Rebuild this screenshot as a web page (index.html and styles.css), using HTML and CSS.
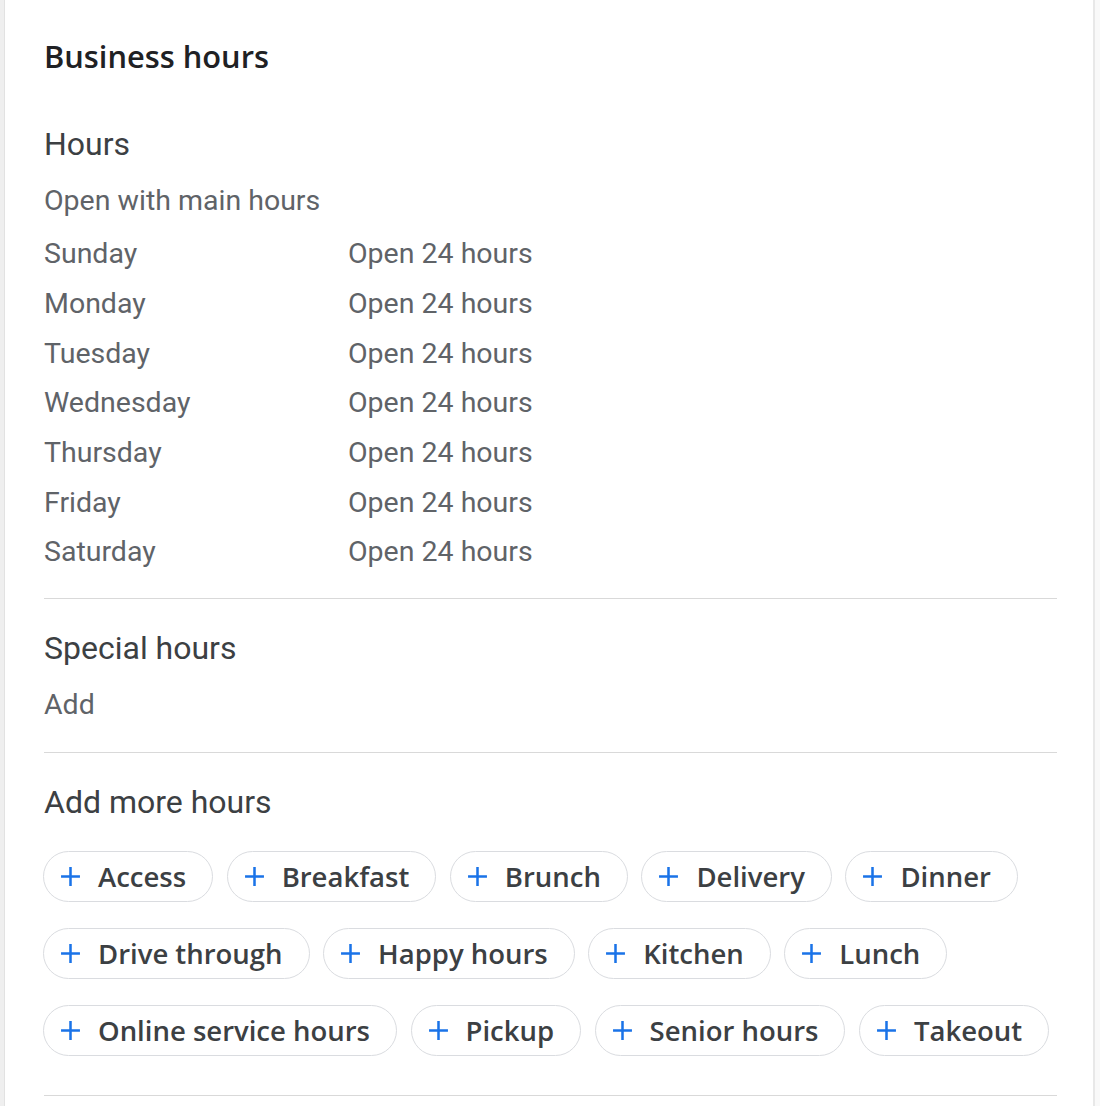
FILE: index.html
```html
<!DOCTYPE html>
<html>
<head>
<meta charset="utf-8">
<link rel="stylesheet" href="styles.css">
</head>
<body>
<div class="page">
  <div class="gutter"></div>
  <main class="card">
    <h1 class="title">Business hours</h1>

    <section class="section">
      <h2 class="heading">Hours</h2>
      <div class="sub">Open with main hours</div>
      <div class="days">
        <div class="day">Sunday</div><div class="val">Open 24 hours</div>
        <div class="day">Monday</div><div class="val">Open 24 hours</div>
        <div class="day">Tuesday</div><div class="val">Open 24 hours</div>
        <div class="day">Wednesday</div><div class="val">Open 24 hours</div>
        <div class="day">Thursday</div><div class="val">Open 24 hours</div>
        <div class="day">Friday</div><div class="val">Open 24 hours</div>
        <div class="day">Saturday</div><div class="val">Open 24 hours</div>
      </div>
    </section>

    <section class="section bordered">
      <h2 class="heading">Special hours</h2>
      <div class="sub">Add</div>
    </section>

    <section class="section bordered last">
      <h2 class="heading">Add more hours</h2>
      <div class="chips">
        <button class="chip"><svg class="plus" viewBox="0 0 20 20"><path d="M10 1v18M1 10h18"/></svg><span>Access</span></button>
        <button class="chip"><svg class="plus" viewBox="0 0 20 20"><path d="M10 1v18M1 10h18"/></svg><span>Breakfast</span></button>
        <button class="chip"><svg class="plus" viewBox="0 0 20 20"><path d="M10 1v18M1 10h18"/></svg><span>Brunch</span></button>
        <button class="chip"><svg class="plus" viewBox="0 0 20 20"><path d="M10 1v18M1 10h18"/></svg><span>Delivery</span></button>
        <button class="chip"><svg class="plus" viewBox="0 0 20 20"><path d="M10 1v18M1 10h18"/></svg><span>Dinner</span></button>
        <button class="chip"><svg class="plus" viewBox="0 0 20 20"><path d="M10 1v18M1 10h18"/></svg><span>Drive through</span></button>
        <button class="chip"><svg class="plus" viewBox="0 0 20 20"><path d="M10 1v18M1 10h18"/></svg><span>Happy hours</span></button>
        <button class="chip"><svg class="plus" viewBox="0 0 20 20"><path d="M10 1v18M1 10h18"/></svg><span>Kitchen</span></button>
        <button class="chip"><svg class="plus" viewBox="0 0 20 20"><path d="M10 1v18M1 10h18"/></svg><span>Lunch</span></button>
        <button class="chip"><svg class="plus" viewBox="0 0 20 20"><path d="M10 1v18M1 10h18"/></svg><span>Online service hours</span></button>
        <button class="chip"><svg class="plus" viewBox="0 0 20 20"><path d="M10 1v18M1 10h18"/></svg><span>Pickup</span></button>
        <button class="chip"><svg class="plus" viewBox="0 0 20 20"><path d="M10 1v18M1 10h18"/></svg><span>Senior hours</span></button>
        <button class="chip"><svg class="plus" viewBox="0 0 20 20"><path d="M10 1v18M1 10h18"/></svg><span>Takeout</span></button>
      </div>
    </section>
    <div class="endrule"></div>
  </main>
  <div class="rightgutter"></div>
</div>
</body>
</html>
```

FILE: styles.css
```css
html, body {
  margin: 0;
  padding: 0;
  background: #f9f9f9;
}
.page {
  display: flex;
  min-height: 1106px;
}
.gutter {
  width: 4px;
  background: #efefef;
  border-right: 1px solid #e2e2e2;
}
.rightgutter {
  width: 3px;
  background: #f9f9f9;
}
.card {
  width: 1090px;
  background: #ffffff;
  border-right: 2px solid #e8e8e8;
  padding: 38px 0 0 39px;
  box-sizing: border-box;
  font-family: Roboto, "Liberation Sans", sans-serif;
}
.title {
  margin: 0;
  font-family: "Open Sans", sans-serif;
  font-weight: 600;
  font-size: 30.8px;
  line-height: 36px;
  color: #202124;
  letter-spacing: 0;
}
.section {
  width: 1013px;
  padding-bottom: 21px;
}
.section:first-of-type {
  margin-top: 50px;
}
.bordered {
  border-top: 1px solid #d9d9d9;
  padding-top: 29px;
  padding-bottom: 29px;
}
.heading {
  margin: 0;
  font-weight: 400;
  font-size: 32px;
  line-height: 40px;
  color: #3c4043;
}
.sub {
  margin-top: 19px;
  font-size: 28.5px;
  line-height: 36px;
  color: #5f6368;
}
.days {
  display: grid;
  grid-template-columns: 304px 1fr;
  grid-auto-rows: 49.7px;
  align-items: center;
  margin-top: 10px;
  font-size: 28.5px;
  color: #5f6368;
}
.chips {
  display: flex;
  flex-wrap: wrap;
  column-gap: 13.5px;
  row-gap: 26px;
  margin: 29px 0 0 -1px;
  width: 1014px;
}
.chip {
  display: flex;
  align-items: center;
  height: 51px;
  box-sizing: border-box;
  padding: 0 26px 0 16px;
  border: 1px solid #dadce0;
  border-radius: 26px;
  background: #fff;
  font-family: "Open Sans", sans-serif;
  font-weight: 600;
  font-size: 27.5px;
  white-space: nowrap;
  color: #3c4043;
  gap: 17px;
}
.plus {
  width: 21px;
  height: 21px;
  flex: none;
}
.plus path {
  stroke: #1a73e8;
  stroke-width: 2.4;
  fill: none;
}
.last {
  padding-bottom: 39px;
}
.endrule {
  width: 1013px;
  border-top: 1px solid #d9d9d9;
}
```
